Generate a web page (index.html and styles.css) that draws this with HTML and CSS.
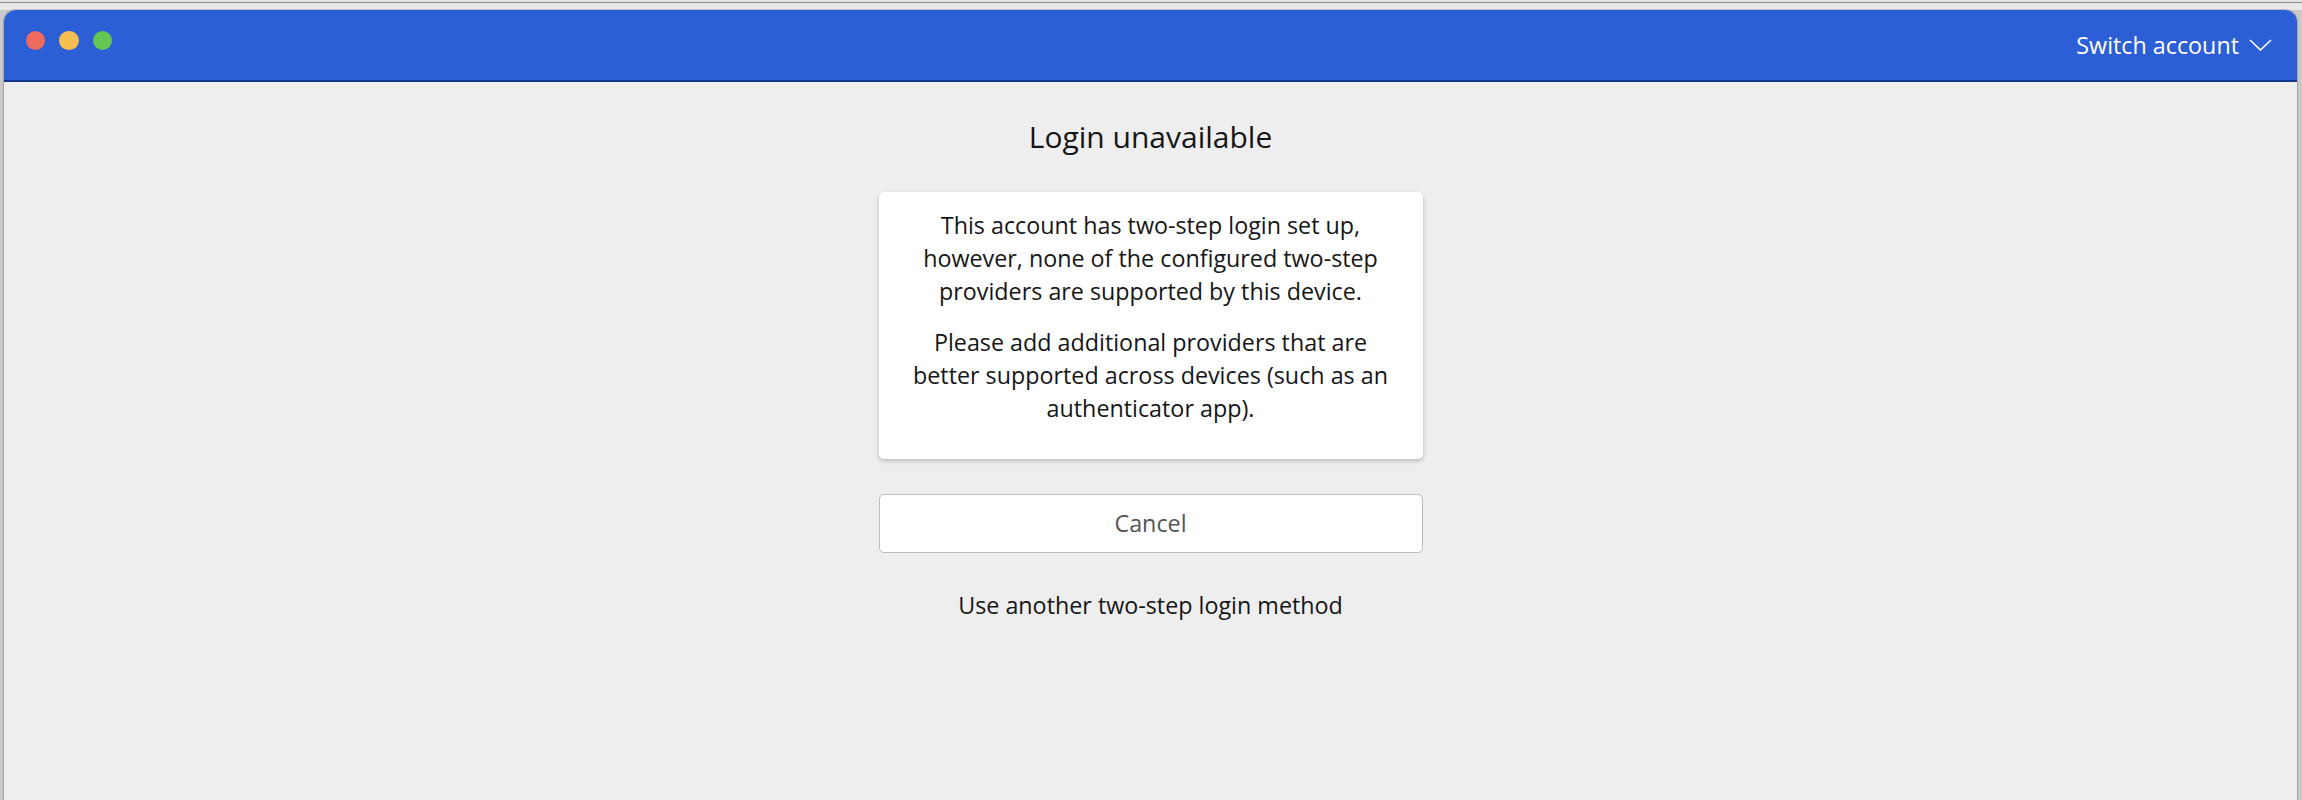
FILE: index.html
```html
<!DOCTYPE html>
<html lang="en">
<head>
    <meta charset="UTF-8">
    <meta name="viewport" content="width=device-width, initial-scale=1.0">
    <title>Login unavailable</title>
    <link rel="stylesheet" href="styles.css">
</head>
<body>
    <div class="window">
        <header class="titlebar">
            <div class="lights">
                <span class="light red"></span>
                <span class="light yellow"></span>
                <span class="light green"></span>
            </div>
            <button class="account-switch">
                Switch account
                <svg class="chevron" width="23" height="12" viewBox="0 0 23 12">
                    <polyline points="1,1 11.5,11 22,1" fill="none" stroke="#fff" stroke-width="1.6"></polyline>
                </svg>
            </button>
        </header>

        <main class="page">
            <div class="box">
                <h1 class="page-title">Login unavailable</h1>
                <div class="card">
                    <p>This account has two-step login set up, however, none of the configured two-step providers are supported by this device.</p>
                    <p>Please add additional providers that are better supported across devices (such as an authenticator app).</p>
                </div>
                <button class="btn-block">Cancel</button>
                <a class="alt-method" href="#">Use another two-step login method</a>
            </div>
        </main>
    </div>
</body>
</html>
```

FILE: styles.css
```css
html, body {
    height: 100%;
}

body {
    margin: 0;
    padding: 10px 5px 0 4px;
    box-sizing: border-box;
    overflow: hidden;
    font-family: "Open Sans", "Liberation Sans", Arial, sans-serif;
    background: linear-gradient(#e4e4e4 0 2px, #8f8f8f 2px 3px, #e8e8e8 3px 10px, #c9c9c9 10px);
}

.window {
    height: 100%;
    display: flex;
    flex-direction: column;
    background-color: #eeeeee;
    border-radius: 12px 12px 0 0;
    overflow: hidden;
    box-shadow: 0 0 0 1px rgba(0, 0, 0, 0.18);
}

/* title bar */
.titlebar {
    height: 70px;
    flex-shrink: 0;
    display: flex;
    align-items: center;
    justify-content: space-between;
    padding: 0 25px 0 22px;
    background-color: #2c5ed6;
    border-bottom: 2px solid #14368f;
}

.lights {
    align-self: flex-start;
    margin-top: 21px;
    display: flex;
    gap: 14px;
}

.light {
    width: 19.3px;
    height: 19.3px;
    border-radius: 50%;
}

.red { background-color: #ee6a5f; }
.yellow { background-color: #f6be50; }
.green { background-color: #62c655; }

.account-switch {
    display: flex;
    align-items: center;
    gap: 10px;
    padding: 0;
    background: none;
    border: none;
    color: #ffffff;
    font-family: inherit;
    font-size: 23.3px;
    line-height: 33px;
    cursor: pointer;
}

/* content */
.page {
    flex: 1;
    padding-top: 37px;
}

.box {
    width: 544px;
    margin: 0 auto;
    display: flex;
    flex-direction: column;
    text-align: center;
}

.page-title {
    margin: 0 0 37px;
    font-size: 30px;
    font-weight: 400;
    line-height: 36px;
    color: #161616;
}

.card {
    padding: 16.5px 24.75px;
    background: #ffffff;
    border-radius: 5px;
    box-shadow: 0 2px 4px rgba(0, 0, 0, 0.22);
    color: #161616;
    font-size: 23.3px;
    line-height: 33.2px;
}

.card p {
    margin: 0 0 17.5px;
}

.btn-block {
    margin-top: 35px;
    height: 58.4px;
    background: #ffffff;
    border: 1px solid #bdbdbd;
    border-radius: 5px;
    color: #555555;
    font-family: inherit;
    font-size: 23.3px;
    cursor: pointer;
}

.alt-method {
    margin-top: 36px;
    color: #161616;
    text-decoration: none;
    font-size: 23.3px;
    line-height: 33px;
}
```
